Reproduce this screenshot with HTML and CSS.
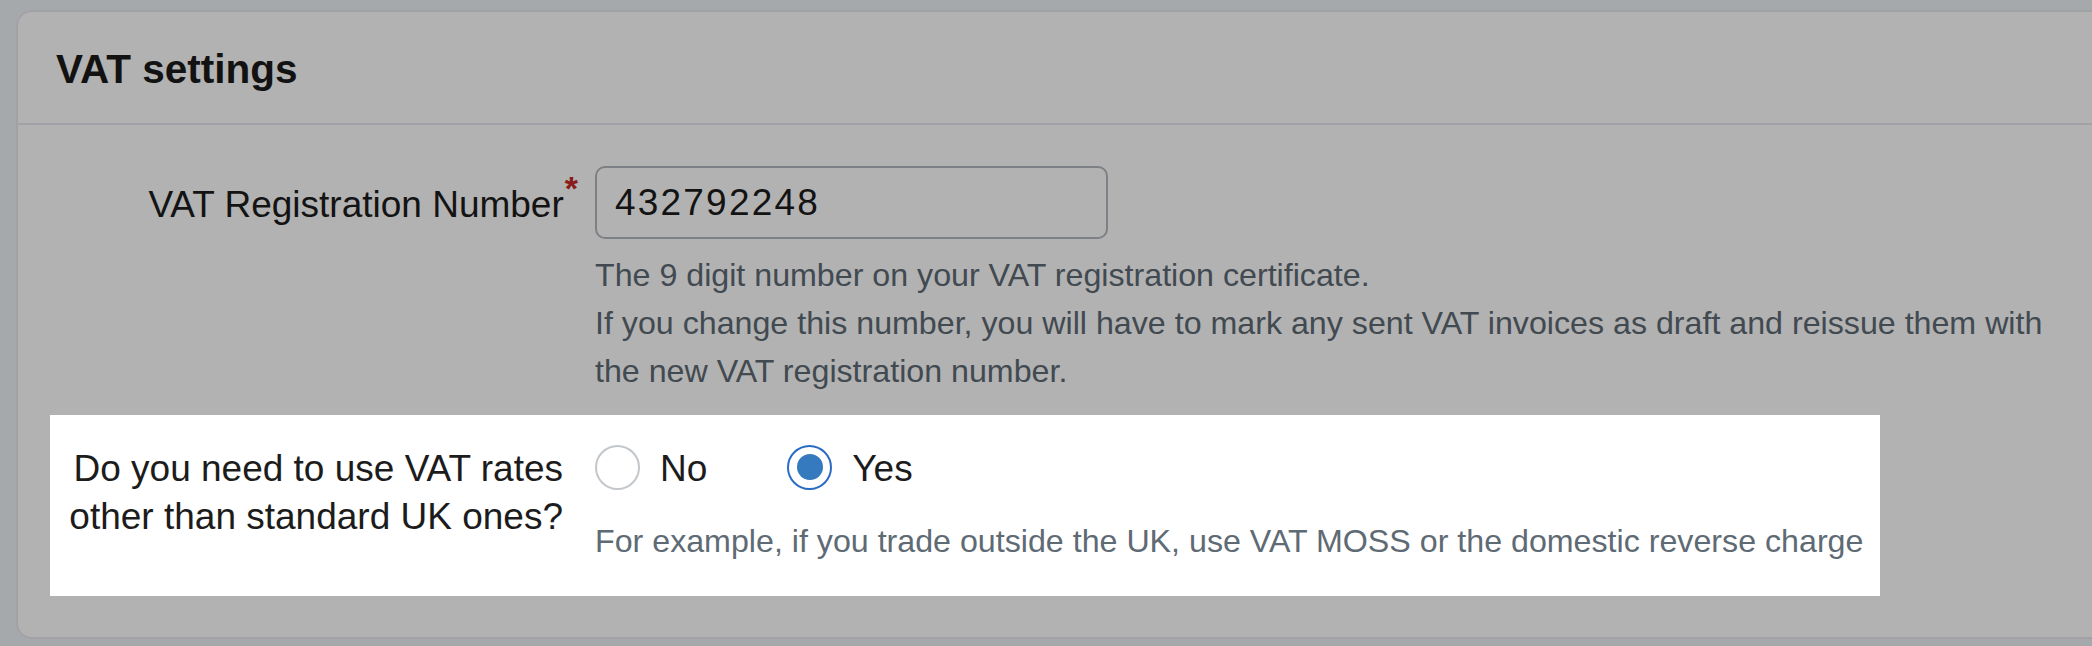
FILE: index.html
```html
<!DOCTYPE html>
<html lang="en">
<head>
<meta charset="utf-8">
<title>VAT settings</title>
<link rel="stylesheet" href="styles.css">
</head>
<body>
<section class="card">
  <header class="card-header">
    <h2 class="card-title">VAT settings</h2>
  </header>
  <div class="card-body">
    <div class="field">
      <label class="field-label" for="vat-number">VAT Registration Number<span class="required">*</span></label>
      <div class="field-control">
        <input class="text-input" id="vat-number" type="text" value="432792248">
        <p class="help">The 9 digit number on your VAT registration certificate.<br>If you change this number, you will have to mark any sent VAT invoices as draft and reissue them with the new VAT registration number.</p>
      </div>
    </div>
    <div class="field field--highlight">
      <div class="field-label">Do you need to use VAT rates other than standard UK ones?</div>
      <div class="field-control">
        <div class="radio-group">
          <label class="radio-option"><input class="radio" type="radio" name="other-rates" value="no">No</label>
          <label class="radio-option"><input class="radio" type="radio" name="other-rates" value="yes" checked>Yes</label>
        </div>
        <p class="help help--tight">For example, if you trade outside the UK, use VAT MOSS or the domestic reverse charge</p>
      </div>
    </div>
  </div>
</section>
</body>
</html>
```

FILE: styles.css
```css
html {
  height: 100%;
  overflow: hidden;
  background: #eef2f7;
}

body {
  margin: 0;
  min-height: 100%;
  box-sizing: border-box;
  padding-top: 10px;
  font-family: "Liberation Sans", Arial, sans-serif;
  color: #1c1c1c;
}

.card {
  margin-left: 16px;
  background: #ffffff;
  border: 2px solid #e9e9ee;
  border-right: none;
  border-radius: 16px 0 0 16px;
}

.card-header {
  padding: 33px 38px 30px;
  border-bottom: 2px solid #e9e9ee;
}

.card-title {
  margin: 0;
  font-size: 40.5px;
  line-height: 48px;
  font-weight: 700;
  color: #1b1b1b;
}

.card-body {
  padding: 41px 0 41px 32px;
}

.field {
  display: grid;
  grid-template-columns: 513px 1fr;
  column-gap: 32px;
}

.field + .field {
  margin-top: 20px;
}

.field-label {
  text-align: right;
  font-size: 37px;
  line-height: 48px;
  padding-top: 15px;
  color: #1c1c1c;
}

.required {
  color: #c62828;
  font-weight: 700;
  font-size: 34px;
  line-height: 0;
  vertical-align: 17px;
  margin-right: -15px;
  margin-left: 1px;
}

.text-input {
  display: block;
  box-sizing: border-box;
  width: 513px;
  height: 73px;
  margin: 0;
  padding: 0 18px;
  border: 2px solid #b4b8bd;
  border-radius: 10px;
  background: #ffffff;
  font-family: "Liberation Sans", Arial, sans-serif;
  font-size: 37px;
  letter-spacing: 2.2px;
  color: #1c1c1c;
  outline: none;
}

.help {
  margin: 12px 0 0;
  max-width: 1470px;
  font-size: 32.2px;
  line-height: 48px;
  color: #5e6a74;
}

.field--highlight {
  position: relative;
  z-index: 1;
  box-sizing: border-box;
  width: 1830px;
  padding: 30px 0 31px;
  background: #ffffff;
  box-shadow: 0 0 0 4000px rgba(0, 0, 0, 0.3);
}

.field--highlight .field-label {
  padding-top: 0;
}

.radio-group {
  display: flex;
  align-items: center;
  gap: 80px;
  height: 48px;
}

.radio-option {
  display: flex;
  align-items: center;
  font-size: 37px;
  line-height: 48px;
  color: #1c1c1c;
}

.radio {
  appearance: none;
  -webkit-appearance: none;
  box-sizing: border-box;
  width: 45px;
  height: 45px;
  margin: -4px 20px 0 0;
  border: 2px solid #c3c7cb;
  border-radius: 50%;
  background: #ffffff;
  display: grid;
  place-content: center;
}

.radio:checked {
  border-color: #2b6cc4;
}

.radio:checked::before {
  content: "";
  display: block;
  width: 26px;
  height: 26px;
  border-radius: 50%;
  background: #3579be;
}

.help--tight {
  margin-top: 24px;
}
```
